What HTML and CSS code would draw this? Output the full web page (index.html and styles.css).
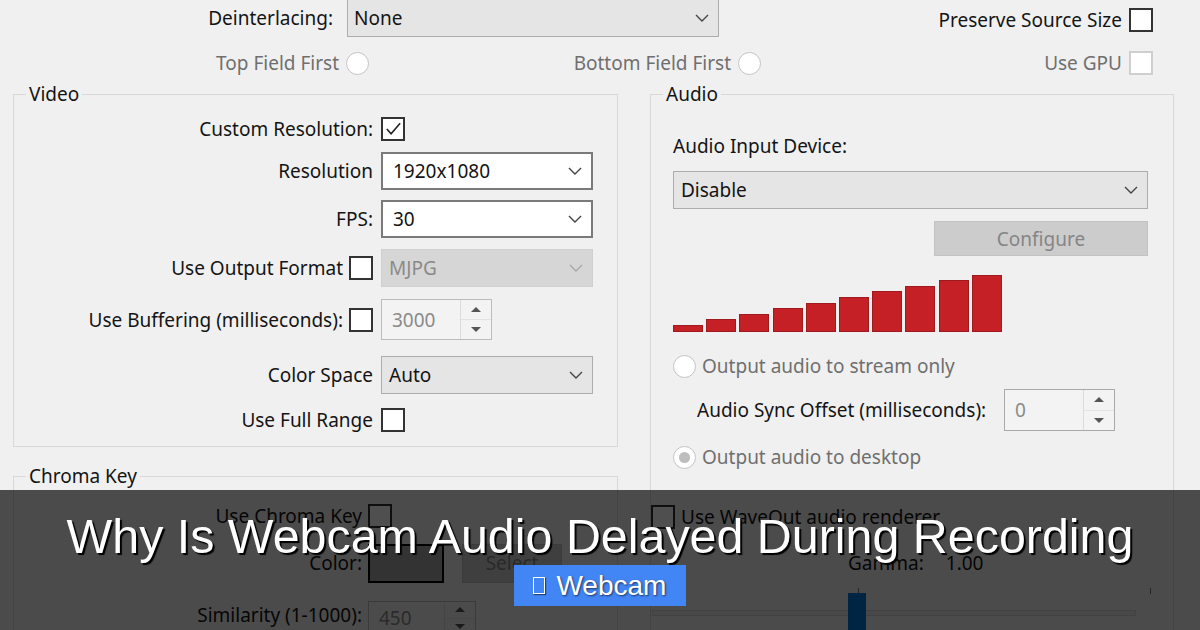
FILE: index.html
```html
<!DOCTYPE html>
<html lang="en">
<head>
    <meta charset="UTF-8">
    <meta name="viewport" content="width=device-width, initial-scale=1.0">
    <title>Why Is Webcam Audio Delayed During Recording</title>
    <link rel="stylesheet" href="styles.css">
</head>
<body>
<div class="screen">
    <div class="top-row">
        <div class="deint">
            <span class="lbl">Deinterlacing:</span>
            <div class="select gray">
                <span>None</span>
                <svg class="chev" width="14" height="8" viewBox="0 0 14 8"><polyline points="1,1 7,7 13,1"/></svg>
            </div>
        </div>
        <div class="opt preserve">Preserve Source Size <span class="check"></span></div>
    </div>

    <div class="field-row">
        <div class="opt off">Top Field First <span class="radio"></span></div>
        <div class="opt off">Bottom Field First <span class="radio"></span></div>
        <div class="opt off">Use GPU <span class="check off"></span></div>
    </div>

    <div class="groups">
        <div class="col-left">
            <fieldset class="group video">
                <legend>Video</legend>
                <div class="video-grid">
                    <div class="cell">Custom Resolution:</div>
                    <div class="cell ctl">
                        <span class="check">
                            <svg width="21" height="21" viewBox="0 0 21 21"><polyline points="4,10 8.5,15 18,4"/></svg>
                        </span>
                    </div>

                    <div class="cell">Resolution</div>
                    <div class="cell ctl">
                        <div class="select white wide"><span>1920x1080</span><svg class="chev" width="14" height="8" viewBox="0 0 14 8"><polyline points="1,1 7,7 13,1"/></svg></div>
                    </div>

                    <div class="cell">FPS:</div>
                    <div class="cell ctl">
                        <div class="select white wide"><span>30</span><svg class="chev" width="14" height="8" viewBox="0 0 14 8"><polyline points="1,1 7,7 13,1"/></svg></div>
                    </div>

                    <div class="cell">Use Output Format <span class="check"></span></div>
                    <div class="cell ctl">
                        <div class="select disabled wide"><span>MJPG</span><svg class="chev" width="14" height="8" viewBox="0 0 14 8"><polyline points="1,1 7,7 13,1"/></svg></div>
                    </div>

                    <div class="cell">Use Buffering (milliseconds): <span class="check"></span></div>
                    <div class="cell ctl">
                        <div class="spin buffering">
                            <span class="val">3000</span>
                            <span class="arrows"><i class="up"></i><i class="down"></i></span>
                        </div>
                    </div>

                    <div class="cell">Color Space</div>
                    <div class="cell ctl">
                        <div class="select gray wide"><span>Auto</span><svg class="chev" width="14" height="8" viewBox="0 0 14 8"><polyline points="1,1 7,7 13,1"/></svg></div>
                    </div>

                    <div class="cell">Use Full Range</div>
                    <div class="cell ctl"><span class="check"></span></div>
                </div>
            </fieldset>

            <fieldset class="group chroma">
                <legend>Chroma Key</legend>
                <div class="chroma-grid">
                    <div class="cell">Use Chroma Key</div>
                    <div class="cell ctl"><span class="check"></span></div>

                    <div class="cell">Color:</div>
                    <div class="cell ctl">
                        <span class="swatch"></span>
                        <span class="btn select-btn">Select</span>
                    </div>

                    <div class="cell">Similarity (1-1000):</div>
                    <div class="cell ctl">
                        <div class="spin similarity">
                            <span class="val">450</span>
                            <span class="arrows"><i class="up"></i><i class="down"></i></span>
                        </div>
                    </div>
                </div>
            </fieldset>
        </div>

        <fieldset class="group audio">
            <legend>Audio</legend>
            <div class="a-label">Audio Input Device:</div>
            <div class="select gray device"><span>Disable</span><svg class="chev" width="14" height="8" viewBox="0 0 14 8"><polyline points="1,1 7,7 13,1"/></svg></div>
            <div class="btn configure">Configure</div>

            <div class="meter">
                <span class="bar" style="height:7px"></span>
                <span class="bar" style="height:13px"></span>
                <span class="bar" style="height:18px"></span>
                <span class="bar" style="height:24px"></span>
                <span class="bar" style="height:29px"></span>
                <span class="bar" style="height:35px"></span>
                <span class="bar" style="height:41px"></span>
                <span class="bar" style="height:46px"></span>
                <span class="bar" style="height:52px"></span>
                <span class="bar" style="height:57px"></span>
            </div>

            <div class="radio-row off"><span class="radio"></span>Output audio to stream only</div>
            <div class="sync-row">
                <span class="sync-lbl">Audio Sync Offset (milliseconds):</span>
                <div class="spin sync">
                    <span class="val">0</span>
                    <span class="arrows"><i class="up"></i><i class="down"></i></span>
                </div>
            </div>
            <div class="radio-row off desktop"><span class="radio on"></span>Output audio to desktop</div>

            <div class="waveout"><span class="check"></span>Use WaveOut audio renderer</div>
            <div class="gamma"><span>Gamma:</span><span class="gval">1.00</span></div>
            <div class="slider">
                <span class="tick t1"></span>
                <span class="tick t2"></span>
                <span class="track"></span>
                <span class="thumb"></span>
            </div>
        </fieldset>
    </div>

    <div class="caption">
        <h1>Why Is Webcam Audio Delayed During Recording</h1>
        <span class="tag"><span class="tofu"></span> Webcam</span>
    </div>
</div>
</body>
</html>
```

FILE: styles.css
```css
body {
    margin: 0;
    background: #f0f0f0;
    font-family: "Noto Sans", "Open Sans", sans-serif;
    font-size: 19px;
    color: #141414;
}
.screen {
    position: relative;
    width: 1200px;
    height: 630px;
    overflow: hidden;
}

/* top rows */
.top-row {
    display: flex;
    align-items: center;
    height: 38px;
    margin-top: -1px;
}
.deint {
    display: grid;
    grid-template-columns: 333px 372px;
    column-gap: 14px;
    align-items: center;
}
.deint .lbl {
    text-align: right;
}
.deint .select {
    padding-left: 6px;
}
.preserve {
    margin-left: auto;
    margin-right: 47px;
    margin-top: 3px;
}
.field-row {
    display: grid;
    grid-template-columns: 369px 392px 1fr;
    height: 26px;
    margin-top: 13px;
    padding-right: 47px;
}
.opt {
    display: flex;
    align-items: center;
    justify-content: flex-end;
    gap: 7px;
    white-space: nowrap;
}
.opt.off {
    color: #6f6f6f;
}

/* controls */
.check {
    display: inline-flex;
    align-items: center;
    justify-content: center;
    width: 20px;
    height: 20px;
    border: 2px solid #333;
    background: #fff;
    flex: none;
}
.check.off {
    border-color: #cfcfcf;
}
.check svg polyline {
    fill: none;
    stroke: #222;
    stroke-width: 1.7;
}
.radio {
    display: inline-flex;
    align-items: center;
    justify-content: center;
    width: 21px;
    height: 21px;
    border: 1px solid #c3c3c3;
    border-radius: 50%;
    background: #fff;
    flex: none;
}
.radio.on::after {
    content: "";
    width: 11px;
    height: 11px;
    border-radius: 50%;
    background: #bdbdbd;
}
.select {
    display: flex;
    align-items: center;
    justify-content: space-between;
    box-sizing: border-box;
    height: 38px;
    padding: 0 9px 0 7px;
    border: 1px solid #adadad;
    background: #e5e5e5;
    white-space: nowrap;
}
.select.white {
    background: #fff;
    border: 2px solid #7a7a7a;
    padding-left: 10px;
}
.select.disabled {
    background: #d6d6d6;
    border-color: #d0d0d0;
    color: #8a8a8a;
}
.select.wide {
    width: 212px;
}
.chev polyline {
    fill: none;
    stroke: #444;
    stroke-width: 1.4;
}
.select.disabled .chev polyline {
    stroke: #a8a8a8;
}
.spin {
    display: flex;
    box-sizing: border-box;
    border: 1px solid #bcbcbc;
    background: #f3f3f3;
    color: #8a8a8a;
}
.spin .val {
    flex: 1;
    display: flex;
    align-items: center;
    padding-left: 10px;
}
.spin .arrows {
    display: flex;
    flex-direction: column;
    width: 30px;
    border-left: 1px solid #dcdcdc;
}
.spin .arrows i {
    flex: 1;
    display: flex;
    align-items: center;
    justify-content: center;
}
.spin .arrows i + i {
    border-top: 1px solid #e2e2e2;
}
.spin .up::after {
    content: "";
    border-left: 5px solid transparent;
    border-right: 5px solid transparent;
    border-bottom: 5px solid #555;
}
.spin .down::after {
    content: "";
    border-left: 5px solid transparent;
    border-right: 5px solid transparent;
    border-top: 5px solid #555;
}
.btn {
    display: flex;
    align-items: center;
    justify-content: center;
    box-sizing: border-box;
    border: 1px solid #c2c2c2;
    background: #cccccc;
    color: #858585;
}

/* group boxes */
.groups {
    display: flex;
    margin-top: 5px;
}
.col-left {
    width: 605px;
    margin-left: 13px;
}
.group {
    margin: 0;
    padding: 0;
    min-width: 0;
    border: 1px solid #d8d8d8;
}
.group legend {
    margin-left: 12px;
    padding: 0 3px;
    line-height: 26px;
}
.video {
    height: 366px;
    box-sizing: border-box;
    padding: 1px 0 6px;
}
.video-grid {
    display: grid;
    grid-template-columns: 359px 212px;
    grid-template-rows: 42px 42px 54px 44px 59px 51px 39px;
    column-gap: 8px;
}
.cell {
    display: flex;
    align-items: center;
    justify-content: flex-end;
    gap: 6px;
    white-space: nowrap;
}
.cell.ctl {
    justify-content: flex-start;
}
.buffering {
    width: 111px;
    height: 41px;
}
.chroma {
    margin-top: 16px;
    height: 300px;
}
.chroma-grid {
    display: grid;
    grid-template-columns: 348px 1fr;
    grid-template-rows: 54px 40px 64px;
    column-gap: 6px;
}
.chroma-grid .ctl {
    gap: 18px;
}
.swatch {
    width: 72px;
    height: 35px;
    border: 2px solid #000;
    background: #a6a6a6;
}
.select-btn {
    width: 100px;
    height: 39px;
}
.similarity {
    width: 108px;
    height: 34px;
    margin-top: 6px;
}

/* audio */
.audio {
    width: 524px;
    height: 600px;
    margin-left: 32px;
    box-sizing: border-box;
    padding: 0 25px 0 22px;
}
.audio legend {
    margin-left: -10px;
}
.a-label {
    margin-top: 26px;
    line-height: 26px;
}
.device {
    margin-top: 12px;
}
.configure {
    width: 214px;
    height: 35px;
    margin: 12px 0 0 auto;
}
.meter {
    display: flex;
    align-items: flex-end;
    gap: 3.2px;
    height: 57px;
    margin-top: 19px;
}
.bar {
    width: 30px;
    box-sizing: border-box;
    background: #c42026;
    border: 1px solid #9e1a1f;
}
.radio-row {
    display: flex;
    align-items: center;
    gap: 6px;
    height: 24px;
    margin-top: 22px;
    white-space: nowrap;
}
.radio-row.off {
    color: #6f6f6f;
}
.radio-row.desktop {
    margin-top: 14px;
}
.sync-row {
    display: flex;
    align-items: center;
    height: 42px;
    margin-top: 11px;
    padding-left: 24px;
}
.sync-lbl {
    width: 293px;
    white-space: nowrap;
}
.sync {
    width: 111px;
    height: 42px;
    margin-left: 14px;
    border-color: #a9a9a9;
}
.waveout {
    display: flex;
    align-items: center;
    gap: 6px;
    height: 24px;
    margin: 36px 0 0 -22px;
    white-space: nowrap;
}
.gamma {
    display: flex;
    gap: 22px;
    height: 26px;
    line-height: 26px;
    margin-top: 21px;
    padding-left: 175px;
}
.slider {
    position: relative;
    height: 50px;
    margin: 12px 0 0 -21px;
}
.slider .tick {
    position: absolute;
    top: 0;
    width: 1px;
    height: 6px;
    background: #777;
}
.slider .t1 { left: 206px; }
.slider .t2 { left: 498px; }
.slider .track {
    position: absolute;
    left: 0;
    right: 12px;
    top: 22px;
    height: 4px;
    border: 1px solid #d6d6d6;
    background: #e7e7e7;
}
.slider .thumb {
    position: absolute;
    left: 196px;
    top: 5px;
    width: 18px;
    height: 42px;
    background: #0078d7;
}

/* title overlay */
.caption {
    position: absolute;
    left: 0;
    right: 0;
    top: 490px;
    bottom: 0;
    display: flex;
    flex-direction: column;
    align-items: center;
    padding-top: 19px;
    background: rgba(0, 0, 0, 0.69);
    font-family: "Liberation Sans", Arial, sans-serif;
    color: #fff;
}
.caption h1 {
    margin: 0;
    font-size: 48.4px;
    font-weight: normal;
    line-height: 55px;
    white-space: nowrap;
    text-shadow: 2px 2px 1px #000;
}
.tag {
    display: flex;
    align-items: center;
    margin-top: 1px;
    padding: 5px 20px 5px 19px;
    background: #4285f4;
    font-size: 28px;
    line-height: 31px;
    text-shadow: 1px 1px 2px rgba(0, 0, 0, 0.6);
    white-space: pre;
}
.tofu {
    display: inline-block;
    width: 10px;
    height: 15px;
    margin-right: 4px;
    border: 1.5px solid #fff;
    box-shadow: 1px 1px 1px rgba(0, 0, 0, 0.5);
}
```
